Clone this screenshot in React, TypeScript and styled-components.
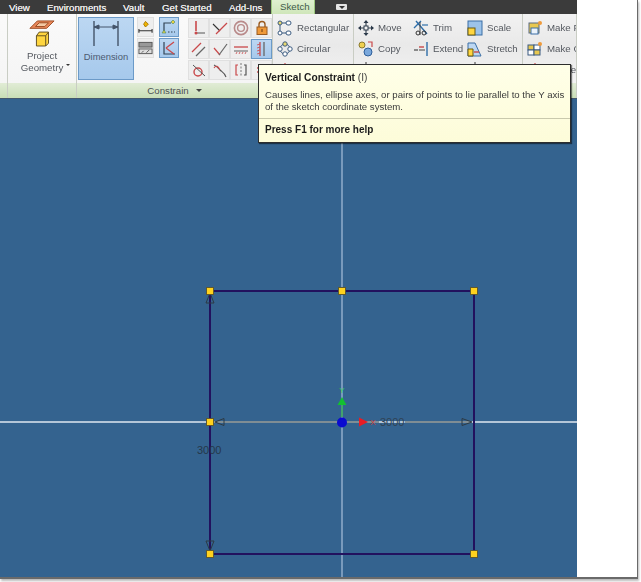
import React from "react";
import styled, { createGlobalStyle } from "styled-components";

const Global = createGlobalStyle`
  html, body { margin: 0; padding: 0; background: #fff; }
  body { width: 641px; height: 582px; overflow: hidden; font-family: "Liberation Sans", Arial, sans-serif; }
`;

const Frame = styled.div`
  position: relative;
  box-sizing: border-box;
  width: 638px;
  height: 579px;
  background: #fff;
  border-right: 1px solid #6a6a6a;
  border-bottom: 2px solid #6a6a6a;
  box-shadow: 1px 2px 2px #bbb;
  filter: blur(0.35px);
`;

const App_ = styled.div`
  width: 577px;
  height: 100%;
  display: flex;
  flex-direction: column;
  overflow: hidden;
`;

const TabBar = styled.div`
  flex: 0 0 14px;
  height: 14px;
  background: #3b3b3b;
  display: flex;
  align-items: center;
  color: #e8e8e8;
  font-size: 9.7px;
  text-shadow: 0 0 0.5px #fff;
`;

const Tab = styled.div<{ $left: number; $w: number }>`
  margin-left: ${p => p.$left}px;
  width: ${p => p.$w}px;
  white-space: nowrap;
`;

const ActiveTab = styled.div`
  margin-left: 13px;
  width: 44px;
  height: 14px;
  box-sizing: border-box;
  padding-left: 8px;
  background: linear-gradient(#dff0d0, #cfe6ba);
  border-right: 1px solid #9cc77f;
  border-left: 1px solid #9cc77f;
  color: #3f5a4a;
  line-height: 13px;
  text-shadow: none;
`;

const TabMenu = styled.div`
  margin-left: 21px;
  width: 11px;
  height: 6px;
  border-radius: 1px;
  background: #e4e4e4;
  display: flex;
  align-items: center;
  justify-content: center;
  &::after {
    content: "";
    border-left: 3px solid transparent;
    border-right: 3px solid transparent;
    border-top: 3px solid #333;
  }
`;

const Ribbon = styled.div`
  flex: 0 0 85px;
  display: flex;
  border-bottom: 1px solid #44586c;
  box-sizing: border-box;
`;

const Panel = styled.div<{ $w: number }>`
  flex: 0 0 ${p => p.$w}px;
  box-sizing: border-box;
  display: flex;
  flex-direction: column;
  border-right: 1px solid #c9cdc4;
  overflow: hidden;
`;

const PanelBody = styled.div<{ $light?: boolean }>`
  flex: 0 0 69px;
  box-sizing: border-box;
  display: flex;
  background: ${p => p.$light ? "linear-gradient(#fafafa, #f5f5f5)" : "linear-gradient(#f2f2f2, #e9e9e9 45%, #f3f3f3)"};
  color: #54585f;
  font-size: 9.7px;
`;

const PanelFooter = styled.div<{ $pad?: number }>`
  flex: 1;
  display: flex;
  align-items: center;
  justify-content: center;
  padding-left: ${p => p.$pad ?? 0}px;
  background: linear-gradient(#e1ecd6, #c9deb6);
  color: #4c5052;
  font-size: 9.7px;
  white-space: nowrap;
`;

const Caret = styled.span`
  display: inline-block;
  margin-left: 7px;
  border-left: 3px solid transparent;
  border-right: 3px solid transparent;
  border-top: 3px solid #444;
`;

const ProjectButton = styled.div`
  flex: 1;
  display: flex;
  flex-direction: column;
  align-items: center;
  padding-top: 5px;
  text-align: center;
  line-height: 11.5px;
  svg { margin-bottom: 3px; }
`;

const ProjectLabel = styled.div`
  position: relative;
  &::after {
    content: "";
    position: absolute;
    right: -7px;
    bottom: 7px;
    border-left: 2px solid transparent;
    border-right: 2px solid transparent;
    border-top: 2px solid #333;
  }
`;

const ConstrainBody = styled.div`
  display: flex;
  padding: 3px 0 0 1px;
`;

const BigButton = styled.div`
  box-sizing: border-box;
  width: 56px;
  height: 63px;
  background: linear-gradient(#bcd7f2, #a6c9ec);
  border: 1px solid #6b9ac8;
  display: flex;
  flex-direction: column;
  align-items: center;
  padding-top: 3px;
  color: #4c5a70;
  font-size: 9.4px;
  svg { margin-bottom: 4px; }
`;

const SmallColumn = styled.div<{ $ml: number }>`
  margin-left: ${p => p.$ml}px;
  display: flex;
  flex-direction: column;
  gap: 1px;
`;

const SquareButton = styled.div<{ $active?: boolean; $w?: number }>`
  box-sizing: border-box;
  width: ${p => p.$w ?? 20}px;
  height: 20px;
  display: flex;
  align-items: center;
  justify-content: center;
  background: ${p => p.$active ? "linear-gradient(#bcd7f2, #a6c9ec)" : "#eeeeee"};
  border: 1px solid ${p => p.$active ? "#6b9ac8" : "#e0e0e0"};
`;

const ToolGrid = styled.div`
  margin-left: 9px;
  margin-top: 1px;
  display: grid;
  grid-template-columns: repeat(4, 21px);
  grid-auto-rows: 21px;
`;

const ToolRows = styled.div<{ $cols: string; $pl: number }>`
  display: grid;
  grid-template-columns: ${p => p.$cols};
  grid-auto-rows: 21px;
  padding: 3px 0 0 ${p => p.$pl}px;
  white-space: nowrap;
`;

const Tool = styled.div`
  display: flex;
  align-items: center;
  gap: 4px;
  svg { flex: 0 0 auto; }
`;

const Tip = styled.div`
  position: absolute;
  left: 258px;
  top: 64px;
  width: 313px;
  height: 79px;
  box-sizing: border-box;
  background: linear-gradient(#ffffe8, #fdfcd9);
  border: 1px solid #2d2d2d;
  box-shadow: 1px 1px 1px rgba(0,0,0,.5);
  color: #3a3a3a;
  font-size: 9.65px;
  line-height: 12px;
  padding: 7px 6px 0 6px;
`;

const TipTitle = styled.div`
  color: #1c1c1c;
  font-weight: 700;
  font-size: 10.2px;
  margin-bottom: 5px;
  span { font-weight: 400; color: #444; }
`;

const TipBody = styled.div`
  white-space: nowrap;
`;

const TipRule = styled.div`
  margin: 5px -6px 5px;
  border-top: 1px solid #c9c9ad;
`;

const TipHelp = styled.div`
  font-weight: 700;
  font-size: 10px;
  color: #1c1c1c;
`;

const Canvas = styled.div`
  flex: 1;
  background: #34638f;
  overflow: hidden;
  svg { display: block; }
`;

const S = ({ children, w = 16, h = 16 }: { children: React.ReactNode; w?: number; h?: number }) => (
  <svg width={w} height={h} viewBox={`0 0 ${w} ${h}`} fill="none">{children}</svg>
);

const RED = "#c9484a";

const IconProject = () => (
  <svg width="26" height="28" viewBox="0 0 28 30" fill="none">
    <path d="M1 10 L9 2 L27 2 L19 10 Z" fill="#e8875a" stroke="#9a4a20" />
    <path d="M7 8 L11 4 L21 4 L17 8 Z" fill="#f4c9a4" stroke="#9a4a20" />
    <path d="M8 18 L11 14 L21 14 L21 26 L18 29 L8 29 Z" fill="#ffd640" stroke="#5a4a20" />
    <path d="M8 18 L18 18 L21 14 M18 18 L18 29" stroke="#5a4a20" />
  </svg>
);

const IconDimension = () => (
  <svg width="28" height="26" viewBox="0 0 28 26" fill="none" stroke="#44546a">
    <path d="M2 0 V25 M26 0 V25" strokeWidth="1.4" />
    <path d="M2 6 H26" />
    <path d="M2 6 l5 -2 v4 Z M26 6 l-5 -2 v4 Z" fill="#44546a" />
  </svg>
);

const I = {
  autoDim: <S><path d="M8 2 l3 3 l-3 3 l-2 -3 Z" fill="#f0b400" stroke="#a87800" /><path d="M1 12 H15 M1 10 V14 M15 10 V14" stroke="#333" strokeWidth="1.2" /></S>,
  show: <S><rect x="1" y="2" width="14" height="5" fill="#999" stroke="#555" /><rect x="1" y="9" width="14" height="5" fill="#ddd" stroke="#555" /><path d="M4 13 l2 -2 M9 13 l3 -3" stroke="#555" /></S>,
  infer: <S><path d="M3 14 V4 H10" stroke="#345" strokeWidth="1.2" /><path d="M12 1 l2 2 l-2 2 l-2 -2 Z M3 11 l2 3 h-4 Z" fill="#e8d040" stroke="#486" strokeWidth=".6" /><path d="M7 13 h7" stroke="#345" strokeDasharray="1.5 1.5" /></S>,
  persist: <S><path d="M3 2 V14 H14" stroke="#345" strokeWidth="1.2" /><path d="M5 8 L13 14 M5 8 L13 2" stroke={RED} strokeWidth="1.3" /></S>,
  coincident: <S><path d="M5 1 V11" stroke={RED} strokeWidth="1.6" /><path d="M5 13 H14" stroke="#777" strokeWidth="1.3" /><circle cx="5" cy="13" r="1.5" fill={RED} /></S>,
  collinear: <S><path d="M1 4 L8 11" stroke="#333" strokeWidth="1.1" /><path d="M4 14 L15 3" stroke={RED} strokeWidth="1.2" /></S>,
  concentric: <S><circle cx="8" cy="8" r="6.6" stroke="#b98a8a" strokeWidth="1.6" /><circle cx="8" cy="8" r="3.4" stroke="#b98a8a" strokeWidth="1.4" /></S>,
  lock: <S><path d="M5 7 V4.5 a3 3 0 0 1 6 0 V7" stroke="#9a5b20" strokeWidth="1.4" /><rect x="3" y="7" width="10" height="7.5" fill="#ef9a3a" stroke="#9a5b20" /><path d="M8 9 v3" stroke="#6a3a10" /></S>,
  parallel: <S><path d="M1 11 L10 2" stroke={RED} strokeWidth="1.2" /><path d="M5 15 L14 6" stroke="#666" strokeWidth="1.2" /></S>,
  perpendicular: <S><path d="M2 7 L8 14" stroke={RED} strokeWidth="1.2" /><path d="M7 14 L15 3" stroke="#666" strokeWidth="1.2" /></S>,
  horizontal: <S><path d="M1 6 H15" stroke={RED} strokeWidth="1.3" /><path d="M1 10 H15" stroke="#777" strokeWidth="1.2" /><path d="M3 13 l1 -2 M6 13 l1 -2 M9 13 l1 -2 M12 13 l1 -2" stroke={RED} strokeWidth=".8" /></S>,
  vertical: <S><path d="M10 1 V15" stroke="#666" strokeWidth="1.3" /><path d="M6 1 V15" stroke={RED} strokeWidth="1.3" /><path d="M3 4 l3 -1 M3 7 l3 -1 M3 10 l3 -1 M3 13 l3 -1" stroke={RED} strokeWidth=".8" /></S>,
  tangent: <S><circle cx="7" cy="10" r="4" stroke={RED} strokeWidth="1.4" /><path d="M2 3 L14 14" stroke="#555" /></S>,
  smooth: <S><path d="M2 3 C6 5 7 7 8 8 C10 10 12 10 14 15" stroke="#555" strokeWidth="1.1" /><path d="M2 6 C4 3 6 4 8 8" stroke={RED} strokeWidth="1.1" /></S>,
  symmetric: <S><path d="M8 1 V15" stroke="#777" strokeDasharray="2 1.5" /><path d="M5 3 H3 V13 H5" stroke={RED} strokeWidth="1.2" /><path d="M11 3 H13 V13 H11" stroke="#555" strokeWidth="1.2" /></S>,
  equal: <S><path d="M3 6 H13" stroke={RED} strokeWidth="1.4" /><path d="M3 10 H13" stroke={RED} strokeWidth="1.4" /></S>,
  rectangular: <S><circle cx="3" cy="3" r="2" fill="#e8d870" stroke="#3a5a80" /><circle cx="3" cy="13" r="2" fill="#fff" stroke="#3a5a80" /><rect x="9" y="1" width="5" height="4" rx="2" fill="#fff" stroke="#3a5a80" /><rect x="9" y="11" width="5" height="4" rx="2" fill="#fff" stroke="#3a5a80" /><path d="M3 5 V11 M5 13 H9 M5 3 H9" stroke="#3a5a80" /></S>,
  circular: <S><circle cx="8" cy="8" r="5" stroke="#3a5a80" /><circle cx="8" cy="3" r="2.2" fill="#e8d870" stroke="#3a5a80" /><circle cx="3" cy="8" r="2.2" fill="#fff" stroke="#3a5a80" /><circle cx="13" cy="8" r="2.2" fill="#fff" stroke="#3a5a80" /><circle cx="8" cy="13" r="2.2" fill="#fff" stroke="#3a5a80" /></S>,
  mirror: <S><path d="M8 1 V8" stroke={RED} strokeWidth="1.2" /></S>,
  rotate: <S><path d="M8 0 V8" stroke="#555" strokeWidth="1.2" /></S>,
  move: <S><path d="M8 1 V15 M1 8 H15" stroke="#2c3a4a" strokeWidth="1.1" /><path d="M8 0 l-2.5 3 h5 Z M8 16 l-2.5 -3 h5 Z M0 8 l3 -2.5 v5 Z M16 8 l-3 -2.5 v5 Z" fill="#2c3a4a" /><rect x="6" y="6" width="4" height="4" fill="#f2f2f2" stroke="#2c3a4a" /></S>,
  copy: <S><circle cx="4" cy="4" r="3" fill="#f0d050" stroke="#8a7a30" /><circle cx="10" cy="11" r="4" fill="#7aa8dc" stroke="#2f5f9a" /><path d="M10 1 H14 V6" stroke={RED} strokeWidth="1.2" /></S>,
  trim: <S><path d="M1 8 L8 1 M3 1 L14 14" stroke="#2f6ea8" strokeWidth="1.4" /><path d="M7 2 V15" stroke="#444" /><circle cx="5" cy="13" r="2" stroke="#333" /><circle cx="11" cy="13" r="2" stroke="#333" /><path d="M9 5 H15" stroke="#2f6ea8" strokeWidth="1.2" /></S>,
  extend: <S><path d="M1 9 H5" stroke="#555" strokeWidth="1.3" /><path d="M6 6 H11" stroke={RED} strokeWidth="1.4" /><path d="M14 1 V15" stroke="#2f6ea8" strokeWidth="1.4" /><path d="M6 9 H12" stroke="#555" strokeWidth="1.1" /></S>,
  scale: <S><rect x="1" y="1" width="14" height="14" fill="#9cc3ea" stroke="#3a6ea5" /><rect x="1" y="8" width="7" height="7" fill="#ffd640" stroke="#6a5a10" /></S>,
  stretch: <S><path d="M1 15 V2 H8 L14 15 Z" fill="#bcd7f2" stroke="#3a6ea5" /><path d="M1 15 V8 H6 V15 Z" fill="#ffd640" stroke="#6a5a10" /><path d="M7 11 H12" stroke={RED} strokeWidth="1.4" /></S>,
  block: <S><rect x="2" y="3" width="10" height="10" fill="#e8c850" stroke="#5a6a80" /><rect x="4" y="8" width="7" height="6" fill="#eaf2fb" stroke="#3a6ea5" /><circle cx="13" cy="3" r="2" fill="#ef9a3a" /></S>,
  comp: <S><rect x="1" y="4" width="6" height="5" fill="#e8c850" stroke="#3a5a80" /><rect x="7" y="4" width="6" height="5" fill="#fff" stroke="#3a5a80" /><rect x="1" y="9" width="6" height="5" fill="#fff" stroke="#3a5a80" /><rect x="7" y="9" width="6" height="5" fill="#e8c850" stroke="#3a5a80" /><circle cx="13" cy="3" r="2" fill="#ef9a3a" /></S>,
};

const Grip = ({ x, y }: { x: number; y: number }) => (
  <rect x={x - 3.5} y={y - 3.5} width="7" height="7" fill="#ffd21e" stroke="#5f5a30" strokeWidth="1" />
);

const Sketch = () => (
  <svg width="577" height="478" viewBox="0 99 577 478" fill="none">
    <path d="M342 99 V577" stroke="#a8c0da" strokeWidth="1.2" />
    <path d="M0 422 H577" stroke="#dfe7f0" strokeWidth="1.5" />
    <path d="M214 422 H379 M405 422 H470" stroke="#4a5450" strokeWidth="1" />
    <path d="M210 291 H474 V554 H210 Z" stroke="#22125e" strokeWidth="2" />
    <path d="M215 422 l9 -3.5 v7 Z M472 422 l-10 -3.5 v7 Z" stroke="#2c3a44" strokeWidth="1" />
    <path d="M210 293 l-4 10 h8 Z M210 551 l-4 -10 h8 Z" stroke="#2c3a44" strokeWidth="1" />
    <Grip x={210} y={291} />
    <Grip x={342} y={291} />
    <Grip x={474} y={291} />
    <Grip x={210} y={422} />
    <Grip x={210} y={554} />
    <Grip x={474} y={554} />
    <path d="M342 417 V405" stroke="#1fa83a" strokeWidth="1.2" />
    <path d="M342 397 l-4.5 8 h9 Z" fill="#12c030" />
    <text x="342" y="393" fill="#2fd05a" fontSize="8" textAnchor="middle" fontFamily="Liberation Sans, sans-serif">Y</text>
    <path d="M359 417.5 L368 422 L359 426.5 Z" fill="#e81c24" />
    <text x="373" y="425" fill="#c93a3a" fontSize="8" textAnchor="middle" fontFamily="Liberation Sans, sans-serif">X</text>
    <circle cx="342" cy="422.5" r="5" fill="#0a0ad0" />
    <text x="380" y="426" fill="#2f4254" fontSize="11" fontFamily="Liberation Sans, sans-serif">3000</text>
    <text x="197" y="454" fill="#25384a" fontSize="11" fontFamily="Liberation Sans, sans-serif">3000</text>
  </svg>
);

const constrainTools = [
  ["coincident", false], ["collinear", false], ["concentric", false], ["lock", false],
  ["parallel", false], ["perpendicular", false], ["horizontal", false], ["vertical", true],
  ["tangent", false], ["smooth", false], ["symmetric", false], ["equal", false],
] as const;

export default function App() {
  return (
    <>
      <Global />
      <Frame>
        <App_>
          <TabBar>
            <Tab $left={9} $w={24}>View</Tab>
            <Tab $left={14} $w={62}>Environments</Tab>
            <Tab $left={14} $w={25}>Vault</Tab>
            <Tab $left={14} $w={53}>Get Started</Tab>
            <Tab $left={14} $w={29}>Add-Ins</Tab>
            <ActiveTab>Sketch</ActiveTab>
            <TabMenu />
          </TabBar>
          <Ribbon>
            <Panel $w={8}><PanelBody $light /><PanelFooter /></Panel>
            <Panel $w={69}>
              <PanelBody $light>
                <ProjectButton>
                  <IconProject />
                  <ProjectLabel>Project<br />Geometry</ProjectLabel>
                </ProjectButton>
              </PanelBody>
              <PanelFooter />
            </Panel>
            <Panel $w={196}>
              <PanelBody $light>
                <ConstrainBody>
                  <BigButton><IconDimension />Dimension</BigButton>
                  <SmallColumn $ml={3}>
                    <SquareButton $w={17}>{I.autoDim}</SquareButton>
                    <SquareButton $w={17}>{I.show}</SquareButton>
                  </SmallColumn>
                  <SmallColumn $ml={5}>
                    <SquareButton $active>{I.infer}</SquareButton>
                    <SquareButton $active>{I.persist}</SquareButton>
                  </SmallColumn>
                  <ToolGrid>
                    {constrainTools.map(([name, active]) => (
                      <SquareButton key={name} $active={active} $w={21}>{I[name]}</SquareButton>
                    ))}
                  </ToolGrid>
                </ConstrainBody>
              </PanelBody>
              <PanelFooter>Constrain<Caret /></PanelFooter>
            </Panel>
            <Panel $w={81}>
              <PanelBody>
                <ToolRows $cols="1fr" $pl={4}>
                  <Tool>{I.rectangular}Rectangular</Tool>
                  <Tool>{I.circular}Circular</Tool>
                  <Tool>{I.mirror}</Tool>
                </ToolRows>
              </PanelBody>
              <PanelFooter />
            </Panel>
            <Panel $w={169}>
              <PanelBody>
                <ToolRows $cols="55px 54px 54px" $pl={4}>
                  <Tool>{I.move}Move</Tool>
                  <Tool>{I.trim}Trim</Tool>
                  <Tool>{I.scale}Scale</Tool>
                  <Tool>{I.copy}Copy</Tool>
                  <Tool>{I.extend}Extend</Tool>
                  <Tool>{I.stretch}Stretch</Tool>
                  <Tool>{I.rotate}</Tool>
                  <Tool />
                  <Tool>{I.rotate}</Tool>
                </ToolRows>
              </PanelBody>
              <PanelFooter />
            </Panel>
            <Panel $w={54}>
              <PanelBody>
                <ToolRows $cols="1fr" $pl={4}>
                  <Tool>{I.block}Make Part</Tool>
                  <Tool>{I.comp}Make Components</Tool>
                  <Tool>{I.mirror}Create</Tool>
                </ToolRows>
              </PanelBody>
              <PanelFooter $pad={14}>Layout</PanelFooter>
            </Panel>
          </Ribbon>
          <Canvas><Sketch /></Canvas>
        </App_>
        <Tip>
          <TipTitle>Vertical Constraint <span>(I)</span></TipTitle>
          <TipBody>Causes lines, ellipse axes, or pairs of points to lie parallel to the Y axis</TipBody>
          <TipBody>of the sketch coordinate system.</TipBody>
          <TipRule />
          <TipHelp>Press F1 for more help</TipHelp>
        </Tip>
      </Frame>
    </>
  );
}
